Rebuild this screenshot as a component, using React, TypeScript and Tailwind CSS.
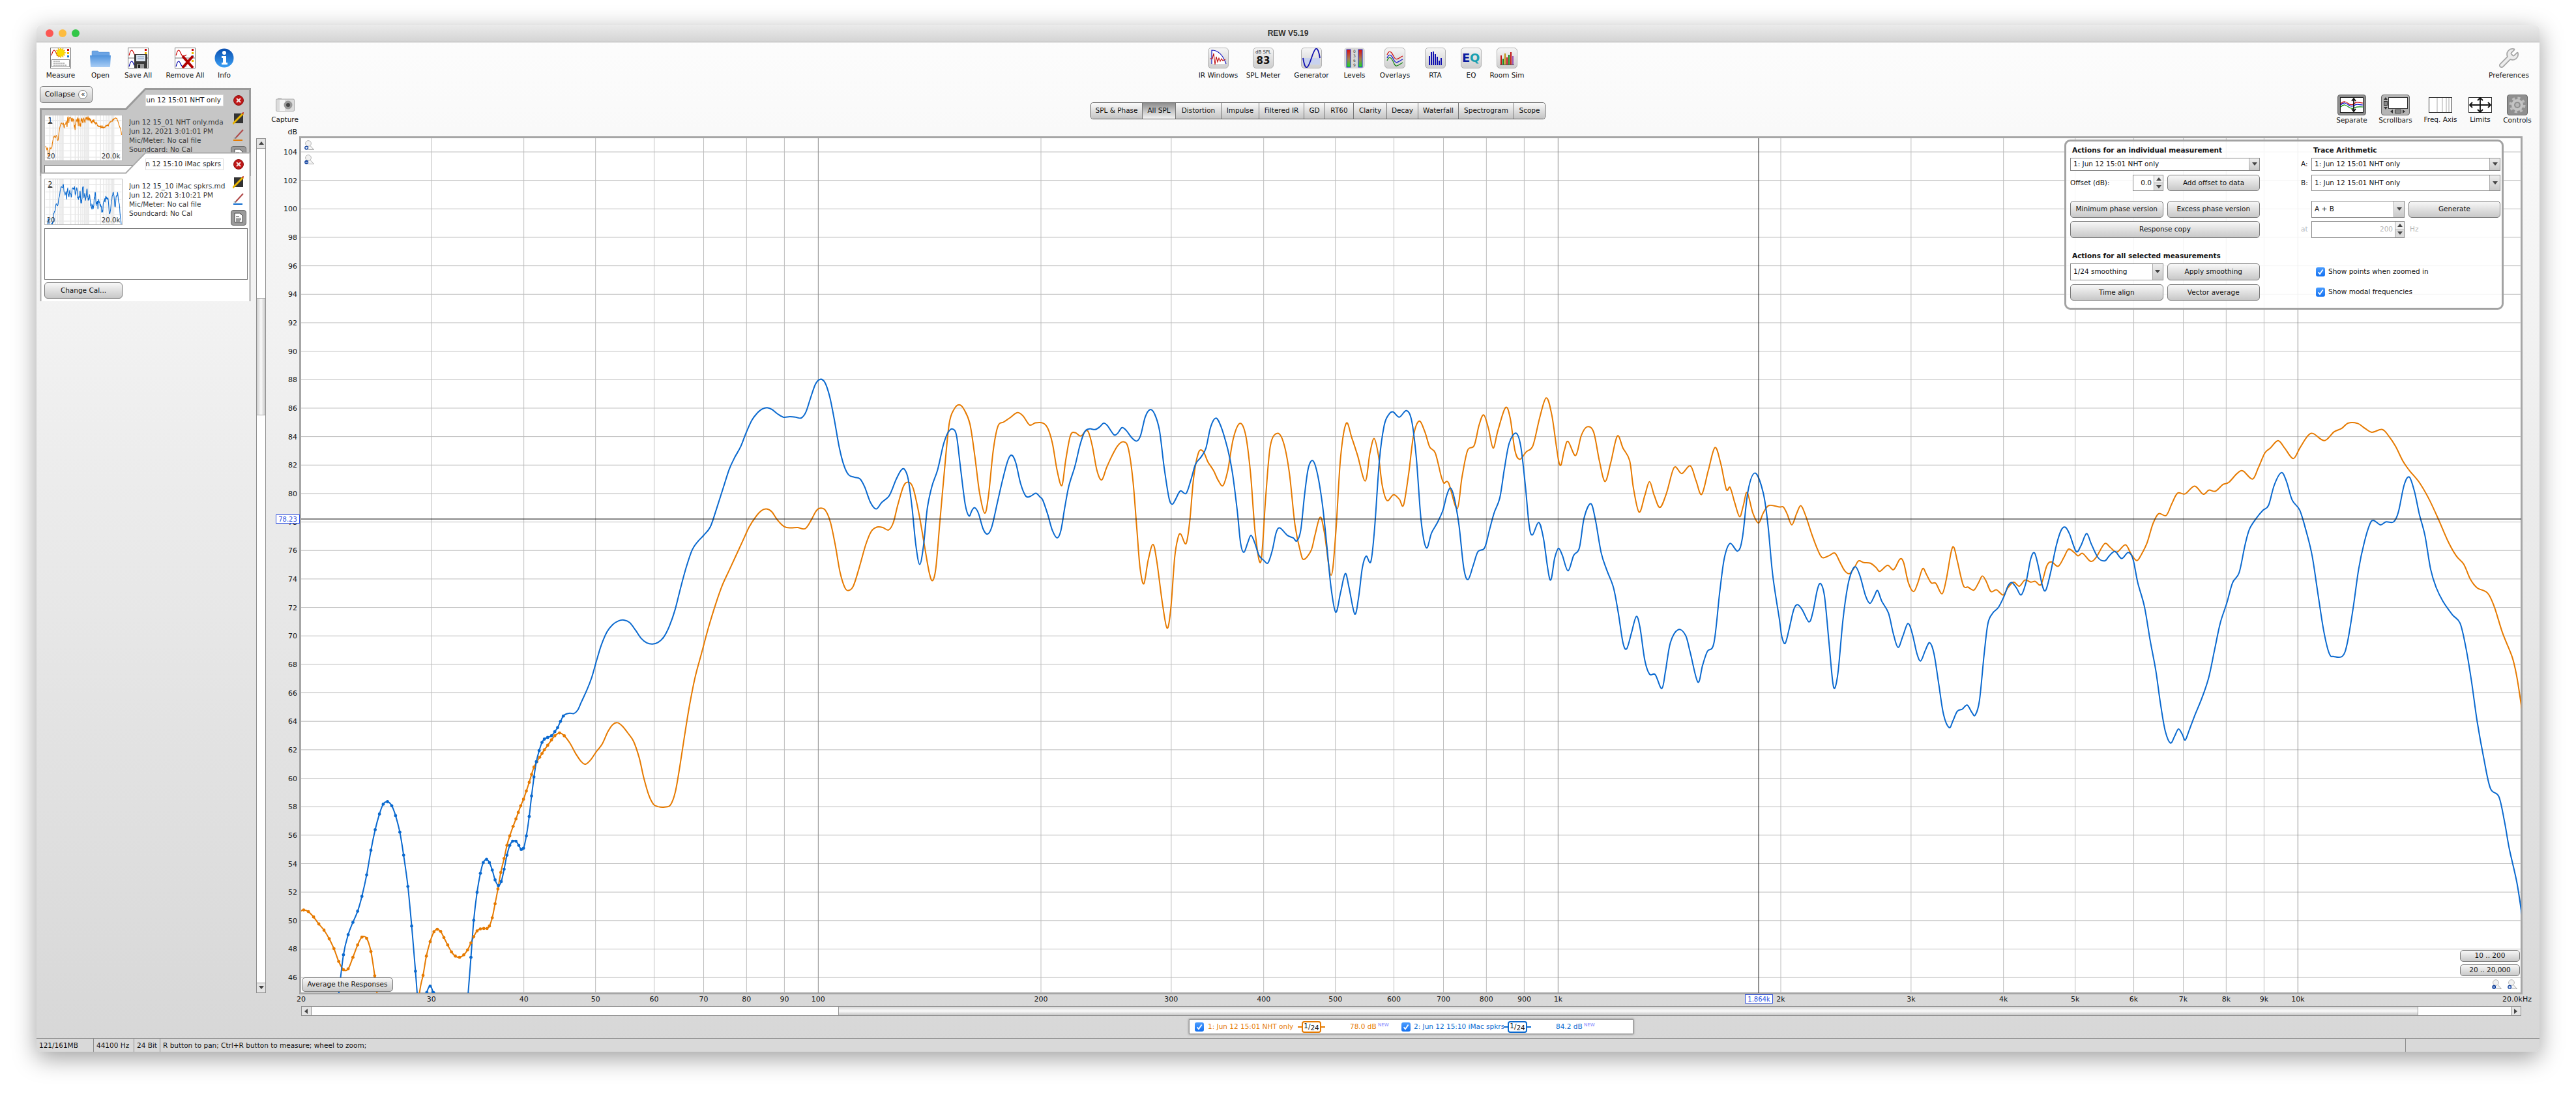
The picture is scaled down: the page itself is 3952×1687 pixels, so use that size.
import { ReactNode } from "react";
import clsx from "clsx";
import { Wrench } from "lucide-react";

// Traced curve points, one block per section of the plot: "x,y" as read off the reference
const BLUE_A =
  "82,1560 92,1464 102,1415 112,1385 122,1358 131,1322 141,1270 150,1210 159,1160 168,1122 176,1098 185,1092 194,1102 202,1126 211,1166 219,1222 228,1298 236,1394 244,1504 250,1590 256,1640 262,1590 268,1555 275,1540 281,1555 287,1590 300,1900 340,1900 351,1600 355,1560 361,1470 367,1380 374,1312 381,1266 387,1240 394,1232 400,1240 406,1258 412,1282 419,1296 425,1286 431,1256 437,1222 443,1198 449,1188 456,1188 462,1198 467,1208 472,1205 478,1175 484,1128 489,1078 494,1032 499,995 505,968 511,948 516,940 523,936 531,932 538,922 544,912 550,897 556,884 562,879 570,877 578,878 586,870 594,850 606,820 616,790 626,750 636,712 648,680 660,662 672,653 684,651 696,657 708,675 720,695 732,706 744,709 756,705 768,692 780,665 792,625 804,570 816,520 828,480 840,460 852,445 866,425 878,385 892,335 906,285 918,255 930,230 942,195 954,165 966,147 976,138 986,135 996,139 1008,150 1020,158 1034,157 1046,158 1058,160 1068,145 1078,110 1088,78 1098,66 1108,74 1118,108 1128,165 1138,230 1148,275 1158,298 1170,304 1182,308 1192,328 1204,365 1216,381 1228,365 1244,348 1258,310 1268,288 1276,285 1284,310 1292,380 1300,470 1308,516 1316,470 1324,380 1334,325 1346,285 1358,225 1368,195 1378,187 1386,205 1394,280 1404,370 1412,398 1418,385 1424,378 1432,392 1442,430 1451,442 1460,425 1472,365 1484,305 1495,260 1503,251 1511,270 1521,320 1532,350 1542,350 1553,343 1562,352";
const ORANGE_A =
  "0,1358 8,1355 18,1359 29,1372 40,1389 51,1404 62,1425 72,1449 82,1480 92,1500 102,1498 112,1470 122,1440 131,1421 141,1424 150,1456 158,1515 163,1560 175,1750 230,1750 252,1560 260,1514 267,1467 275,1432 283,1408 290,1402 297,1407 304,1422 312,1440 320,1457 328,1467 337,1470 346,1464 354,1452 361,1435 367,1420 374,1406 381,1401 388,1400 395,1400 400,1394 406,1374 412,1340 418,1304 424,1264 431,1230 437,1198 443,1175 450,1152 456,1134 461,1118 466,1102 472,1086 478,1066 484,1045 489,1026 494,1008 500,995 506,984 511,975 516,966 523,955 531,942 538,932 548,925 558,932 570,950 582,975 594,995 603,1001 614,990 626,970 638,952 650,922 660,905 670,900 680,908 692,925 704,945 716,985 726,1035 736,1075 746,1098 756,1104 770,1105 782,1100 792,1070 802,1005 812,930 822,860 834,790 848,730 862,670 878,610 892,565 906,530 920,495 934,460 948,425 962,400 974,385 985,381 996,388 1008,408 1022,424 1036,427 1050,426 1066,429 1078,410 1090,385 1100,379 1110,386 1120,415 1130,470 1140,535 1150,572 1158,579 1168,568 1180,525 1194,468 1206,435 1218,425 1230,426 1242,432 1252,415 1262,370 1274,325 1284,316 1294,330 1306,390 1318,470 1328,535 1335,555 1342,525 1350,420 1360,290 1370,175 1380,140 1391,128 1402,140 1414,175 1424,250 1434,340 1445,391 1453,350 1463,240 1473,180 1485,170 1498,160 1514,147 1526,155 1540,177 1552,172";
const BLUE_B =
  "0,490 10,545 20,610 30,640 38,610 46,520 55,430 68,350 78,270 88,215 98,203 110,206 120,195 128,180 136,190 150,227 158,220 167,198 176,210 188,240 198,252 206,230 216,155 226,126 236,145 246,210 256,360 266,480 273,505 280,485 290,452 302,462 312,410 322,345 334,315 344,280 354,195 365,160 376,195 390,285 400,380 410,530 417,660 424,698 432,660 439,630 447,660 456,710 466,730 475,740 484,690 492,620 500,600 516,630 528,640 536,652 544,610 552,470 560,360 570,331 580,390 590,510 598,650 608,840 618,938 628,860 638,783 646,840 658,945 666,880 674,760 682,713 692,735 700,600 710,330 720,190 730,145 739,135 752,156 767,130 778,170 788,320 798,570 809,680 820,620 832,580 844,530 852,470 860,440 868,480 878,590 888,760 897,807 908,750 918,695 932,680 942,610 952,540 964,480 974,360 984,260 998,220 1008,270 1018,430 1026,590 1033,628 1046,578 1056,640 1070,808 1080,720 1088,682 1096,710 1108,772 1120,710 1132,680 1142,560 1156,503 1166,570 1178,700 1190,770 1204,840 1214,940 1224,1060 1232,1084 1242,1020 1252,955 1260,1000 1270,1130 1280,1186 1292,1188 1306,1244 1314,1170 1324,1060 1340,1008 1356,1030 1366,1100 1382,1218 1392,1150 1402,1095 1416,1060 1428,860 1438,720 1450,662 1466,693 1476,640 1488,450 1503,380 1520,460 1530,590 1540,790";
const ORANGE_B =
  "0,180 10,200 20,260 30,370 40,430 48,330 58,230 68,218 80,232 94,210 104,270 114,370 124,408 134,360 146,310 158,270 170,255 180,280 190,410 198,600 205,760 213,824 222,730 232,666 240,730 252,900 262,1002 270,920 278,720 285,640 291,625 302,663 310,570 318,400 328,300 338,293 348,335 360,370 370,410 380,430 390,370 402,240 416,181 428,230 438,380 448,620 460,735 470,480 480,270 495,221 508,260 520,380 532,590 544,700 551,726 566,690 574,630 585,557 594,620 608,790 618,620 628,320 640,181 652,240 664,310 680,412 690,300 699,242 708,310 716,430 726,490 740,467 752,485 761,508 772,380 782,230 794,172 806,215 816,275 828,300 840,390 846,420 856,420 874,523 884,400 896,290 910,270 920,190 930,147 940,200 950,280 960,210 976,118 986,160 996,290 1006,325 1020,295 1034,270 1048,160 1062,79 1074,150 1090,345 1100,290 1108,253 1124,310 1136,230 1148,195 1162,215 1174,330 1186,414 1198,340 1212,232 1224,280 1238,330 1246,440 1258,537 1270,470 1280,415 1290,470 1302,518 1316,460 1332,358 1348,382 1366,351 1378,410 1390,466 1404,370 1418,278 1430,340 1442,445 1450,438 1460,500 1470,555 1478,510 1486,458 1498,540 1510,580 1520,540 1532,510";
const BLUE_C =
  "0,640 5,690 12,710 20,670 30,610 38,595 48,610 62,646 70,620 80,550 87,533 95,570 104,700 112,820 117,842 124,790 134,640 144,540 153,495 161,483 170,510 182,570 191,591 200,570 207,553 216,585 230,620 240,680 250,722 260,690 271,651 280,680 290,740 298,762 308,730 317,708 326,740 336,830 346,920 358,960 366,940 375,912 386,905 396,893 406,915 413,923 422,880 432,740 440,650 450,620 462,603 474,570 482,540 490,529 500,545 510,566 520,530 530,460 538,441 546,480 555,540 562,552 572,500 584,420 594,375 603,365 612,385 626,437 636,420 648,384 658,415 672,455 686,465 696,450 708,437 722,458 736,440 746,460 756,530 770,600 782,700 794,790 804,890 814,970 825,1006 834,985 842,964 850,980 856,997 864,970 876,925 892,870 906,810 918,730 930,650 944,590 956,530 970,500 982,420 992,370 1008,335 1020,315 1032,300 1044,240 1059,203 1070,230 1082,285 1098,315 1112,380 1124,450 1136,560 1148,670 1160,740 1170,749 1188,748 1198,710 1210,610 1222,490 1234,410 1246,355 1254,345 1268,358 1280,349 1296,349 1306,320 1318,240 1329,216 1340,260 1350,325 1362,390 1374,490 1386,545 1400,585 1420,625 1436,650 1448,720 1460,820 1472,940 1486,1050 1500,1140 1518,1165 1530,1240 1540,1320 1556,1420 1568,1530";
const ORANGE_C =
  "0,305 8,305 16,325 26,358 36,325 45,301 55,330 68,385 80,430 90,455 104,450 117,442 128,470 138,495 148,503 158,485 167,465 178,470 192,472 204,485 212,496 228,478 241,491 254,460 262,470 272,530 283,556 292,530 302,488 310,505 320,530 330,532 343,563 352,520 362,440 368,425 376,470 388,538 398,543 410,552 420,530 428,510 436,525 446,556 458,551 472,566 482,545 494,528 506,540 518,522 530,528 540,526 552,535 564,480 574,468 588,481 600,455 610,430 622,440 630,450 640,443 656,466 668,455 686,414 698,425 712,439 730,417 742,445 754,464 764,445 776,410 788,355 800,325 816,330 828,295 840,264 856,266 876,243 894,267 906,255 920,258 936,238 948,232 966,205 978,198 998,222 1010,190 1024,145 1036,130 1052,108 1066,130 1084,161 1098,130 1114,95 1126,87 1150,108 1170,82 1186,72 1200,56 1220,57 1236,72 1250,83 1272,75 1286,95 1300,125 1316,170 1330,198 1350,232 1370,280 1390,340 1410,405 1428,450 1444,475 1458,520 1472,545 1494,560 1508,600 1526,680 1546,750 1556,810 1568,920";

type Point = [number, number];

const ORIGIN_X = 408;
const ORIGIN_Y = 190;
const PLOT_BOTTOM = 1523;

const parse = (raw: string, ox: number, oy: number, sy: number): Point[] =>
  raw.split(" ").map((pair) => {
    const [ix, iy] = pair.split(",").map(Number);
    return [ox + ix / 1.3754, oy + iy / sy];
  });

const sectionA = (raw: string) => parse(raw, 460, 540, 1.5838);

const bluePoints = [...sectionA(BLUE_A), ...parse(BLUE_B, 1600, 580, 2.613), ...parse(BLUE_C, 2730, 620, 1.936)];
const orangePoints = [...sectionA(ORANGE_A), ...parse(ORANGE_B, 1600, 580, 2.613), ...parse(ORANGE_C, 2730, 620, 1.936)];

// dots only show where the points are far apart, below about 50 Hz
const dotsOf = (raw: string) => sectionA(raw).filter(([x, y]) => x <= 868 && y < PLOT_BOTTOM);

const smoothPath = (points: Point[]) => {
  let d = `M${points[0][0].toFixed(1)} ${points[0][1].toFixed(1)}`;
  for (let i = 0; i < points.length - 1; i++) {
    const p0 = points[Math.max(i - 1, 0)];
    const p1 = points[i];
    const p2 = points[i + 1];
    const p3 = points[Math.min(i + 2, points.length - 1)];
    const c1x = p1[0] + (p2[0] - p0[0]) / 6;
    const c1y = p1[1] + (p2[1] - p0[1]) / 6;
    const c2x = p2[0] - (p3[0] - p1[0]) / 6;
    const c2y = p2[1] - (p3[1] - p1[1]) / 6;
    d += `C${c1x.toFixed(1)} ${c1y.toFixed(1)} ${c2x.toFixed(1)} ${c2y.toFixed(1)} ${p2[0].toFixed(1)} ${p2[1].toFixed(1)}`;
  }
  return d;
};

const xOf = (freq: number) => 462 + 1135 * Math.log10(freq / 20);
const yOf = (db: number) => 233 + (104 - db) * 21.83;

const FREQ_LINES = [
  30, 40, 50, 60, 70, 80, 90, 100, 200, 300, 400, 500, 600, 700, 800, 900, 1000, 2000, 3000, 4000, 5000, 6000, 7000,
  8000, 9000, 10000,
];
const freqLabel = (f: number) => (f >= 1000 ? `${f / 1000}k` : `${f}`);
const DB_LINES = Array.from({ length: 30 }, (_, i) => 104 - i * 2);

function Plot() {
  const blueDots = dotsOf(BLUE_A);
  const orangeDots = dotsOf(ORANGE_A);

  return (
    <svg width={3488} height={1350} viewBox={`${ORIGIN_X} ${ORIGIN_Y} 3488 1350`} className="block">
      <defs>
        <clipPath id="plot-clip">
          <rect x={462} y={212} width={3406} height={1311} />
        </clipPath>
      </defs>
      <rect x={460.5} y={210.5} width={3408} height={1313} fill="#fff" stroke="#a6a6a6" strokeWidth={3} />
      {DB_LINES.map((db) => (
        <line key={db} x1={462} x2={3868} y1={yOf(db)} y2={yOf(db)} stroke="#bdbdbd" />
      ))}
      {FREQ_LINES.map((f) => (
        <line
          key={f}
          x1={xOf(f)}
          x2={xOf(f)}
          y1={212}
          y2={PLOT_BOTTOM}
          stroke={f === 100 || f === 1000 || f === 10000 ? "#8c8c8c" : "#bdbdbd"}
        />
      ))}
      <g clipPath="url(#plot-clip)">
        <path d={smoothPath(orangePoints)} fill="none" stroke="#e67a00" strokeWidth={2} />
        <path d={smoothPath(bluePoints)} fill="none" stroke="#0a69cf" strokeWidth={2} />
        {orangeDots.map(([x, y], i) => (
          <circle key={i} cx={x} cy={y} r={2.4} fill="#e67a00" />
        ))}
        {blueDots.map(([x, y], i) => (
          <circle key={i} cx={x} cy={y} r={2.4} fill="#0a69cf" />
        ))}
      </g>
      <line x1={462} x2={3868} y1={796} y2={796} stroke="#111" />
      <line x1={2698} x2={2698} y1={212} y2={PLOT_BOTTOM} stroke="#222" />

      <g fontSize={11} fill="#111" textAnchor="end">
        <text x={456} y={206}>
          dB
        </text>
        {DB_LINES.map((db) => (
          <text key={db} x={456} y={yOf(db) + 4}>
            {db}
          </text>
        ))}
      </g>
      <g fontSize={11} fill="#111" textAnchor="middle">
        <text x={462} y={1536}>
          20
        </text>
        {FREQ_LINES.map((f) => (
          <text key={f} x={xOf(f)} y={1536}>
            {freqLabel(f)}
          </text>
        ))}
        <text x={3884} y={1536} textAnchor="end">
          20.0kHz
        </text>
      </g>

      <rect x={423.5} y={789.5} width={36} height={13} fill="#fff" stroke="#2d4fe0" />
      <text x={441.5} y={800} fontSize={10} fill="#2d4fe0" textAnchor="middle">
        78.23
      </text>
      <rect x={2677.5} y={1525.5} width={42} height={13} fill="#fff" stroke="#2d4fe0" />
      <text x={2698.5} y={1536} fontSize={10} fill="#2d4fe0" textAnchor="middle">
        1.864k
      </text>
    </svg>
  );
}

function Magnifier({ minus }: { minus?: boolean }) {
  return (
    <svg width={15} height={15} viewBox="0 0 15 15" className="block">
      <circle cx={6} cy={5} r={4.4} fill="#f1f1f1" stroke="#b5b5b5" />
      <path d="M9 8.5 14.5 14.5 H6" fill="#f4f4f4" stroke="#aaa" />
      <circle cx={3.2} cy={11.8} r={3} fill="#0b3d9c" />
      <rect x={1.4} y={11.2} width={3.6} height={1.2} fill="#fff" />
      {!minus && <rect x={2.6} y={10} width={1.2} height={3.6} fill="#fff" />}
    </svg>
  );
}

function Arrow({ dir }: { dir: "up" | "down" | "left" | "right" }) {
  const d = { up: "M4 1 8 6H0Z", down: "M4 6 8 1H0Z", left: "M1 4 6 0V8Z", right: "M6 4 1 0V8Z" }[dir];
  return (
    <svg width={8} height={8} viewBox="0 0 8 8" className="block">
      <path d={d} fill="#444" />
    </svg>
  );
}

function Btn({ children, className }: { children: ReactNode; className?: string }) {
  return (
    <div
      className={clsx(
        "flex items-center justify-center whitespace-nowrap rounded-[5px] border border-[#777] bg-linear-to-b from-[#f8f8f8] to-[#c8c8c8] text-[10.5px] text-[#111]",
        className,
      )}
    >
      {children}
    </div>
  );
}

function Select({ value, className }: { value: string; className?: string }) {
  return (
    <div className={clsx("flex items-stretch border border-[#888] bg-white text-[10.5px] text-[#111]", className)}>
      <div className="flex flex-1 items-center overflow-hidden whitespace-nowrap pl-[4px]">{value}</div>
      <div className="flex w-[16px] items-center justify-center border-l border-[#aaa] bg-linear-to-b from-[#eee] to-[#c9c9c9]">
        <Arrow dir="down" />
      </div>
    </div>
  );
}

function Spinner({ value, className, disabled }: { value: string; className?: string; disabled?: boolean }) {
  return (
    <div className={clsx("flex items-stretch border border-[#888] bg-white text-[10.5px]", className)}>
      <div
        className={clsx(
          "flex flex-1 items-center justify-end pr-[3px]",
          disabled ? "text-[#b5b5b5]" : "text-[#111]",
        )}
      >
        {value}
      </div>
      <div className="flex w-[14px] flex-col border-l border-[#aaa]">
        <div className="flex flex-1 items-center justify-center border-b border-[#aaa] bg-[#f0f0f0]">
          <Arrow dir="up" />
        </div>
        <div className="flex flex-1 items-center justify-center bg-[#dcdcdc]">
          <Arrow dir="down" />
        </div>
      </div>
    </div>
  );
}

function Check() {
  return (
    <div className="flex h-[14px] w-[14px] shrink-0 items-center justify-center rounded-[3px] bg-linear-to-b from-[#4a9dff] to-[#0f6ff0]">
      <svg width={10} height={10} viewBox="0 0 10 10" className="block">
        <path d="M1.6 5.4 4 8.2 8.6 1.4" fill="none" stroke="#fff" strokeWidth={1.8} />
      </svg>
    </div>
  );
}

function ControlsPanel() {
  return (
    <div className="absolute left-[2759px] top-[24px] flex h-[261px] w-[674px] rounded-[9px] border-[3px] border-[#a2a2a2] bg-white/85 pl-[6px] text-[#111]">
      <div className="flex w-[291px] flex-col">
        <div className="mt-[5px] h-[16px] pl-[3px] text-[10.5px] font-bold leading-[16px]">
          Actions for an individual measurement
        </div>
        <Select value="1: Jun 12 15:01 NHT only" className="mt-[4px] h-[20px]" />
        <div className="mt-[6px] flex h-[25px] items-center text-[10.5px]">
          <div className="w-[96px]">Offset (dB):</div>
          <Spinner value="0.0" className="h-[25px] w-[47px]" />
          <Btn className="ml-[6px] h-[25px] flex-1">Add offset to data</Btn>
        </div>
        <div className="mt-[15px] flex h-[26px] gap-[6px]">
          <Btn className="flex-1">Minimum phase version</Btn>
          <Btn className="flex-1">Excess phase version</Btn>
        </div>
        <Btn className="mt-[5px] h-[26px]">Response copy</Btn>
        <div className="mt-[19px] h-[16px] pl-[3px] text-[10.5px] font-bold leading-[16px]">
          Actions for all selected measurements
        </div>
        <div className="mt-[4px] flex h-[26px] gap-[6px]">
          <Select value="1/24 smoothing" className="flex-1" />
          <Btn className="flex-1">Apply smoothing</Btn>
        </div>
        <div className="mt-[6px] flex h-[25px] gap-[6px]">
          <Btn className="flex-1">Time align</Btn>
          <Btn className="flex-1">Vector average</Btn>
        </div>
      </div>

      <div className="ml-[63px] flex w-[306px] flex-col text-[10.5px]">
        <div className="mt-[5px] h-[16px] pl-[19px] font-bold leading-[16px]">Trace Arithmetic</div>
        <div className="mt-[4px] flex h-[20px] items-center">
          <div className="w-[16px]">A:</div>
          <Select value="1: Jun 12 15:01 NHT only" className="h-[20px] flex-1" />
        </div>
        <div className="mt-[6px] flex h-[25px] items-center">
          <div className="w-[16px]">B:</div>
          <Select value="1: Jun 12 15:01 NHT only" className="h-[25px] flex-1" />
        </div>
        <div className="mt-[15px] flex h-[26px] pl-[16px]">
          <Select value="A + B" className="w-[143px]" />
          <Btn className="ml-[6px] flex-1">Generate</Btn>
        </div>
        <div className="mt-[5px] flex h-[26px] items-center text-[#b5b5b5]">
          <div className="w-[16px]">at</div>
          <Spinner value="200" disabled className="h-[26px] w-[143px]" />
          <div className="ml-[8px]">Hz</div>
        </div>
        <div className="mt-[44px] flex h-[16px] items-center pl-[23px]">
          <Check />
          <div className="ml-[5px]">Show points when zoomed in</div>
        </div>
        <div className="mt-[15px] flex h-[16px] items-center pl-[23px]">
          <Check />
          <div className="ml-[5px]">Show modal frequencies</div>
        </div>
      </div>
    </div>
  );
}

const TABS = [
  { label: "SPL & Phase", w: "w-[79px]" },
  { label: "All SPL", w: "w-[51px]", active: true },
  { label: "Distortion", w: "w-[70px]" },
  { label: "Impulse", w: "w-[58px]" },
  { label: "Filtered IR", w: "w-[69px]" },
  { label: "GD", w: "w-[32px]" },
  { label: "RT60", w: "w-[44px]" },
  { label: "Clarity", w: "w-[51px]" },
  { label: "Decay", w: "w-[48px]" },
  { label: "Waterfall", w: "w-[62px]" },
  { label: "Spectrogram", w: "w-[85px]" },
  { label: "Scope", w: "w-[47px]" },
];

function Tabs() {
  return (
    <div className="ml-[1206px] mt-[30px] flex h-[26px] self-start overflow-hidden rounded-[4px] border border-[#555]">
      {TABS.map((tab) => (
        <div
          key={tab.label}
          className={clsx(
            "flex items-center justify-center whitespace-nowrap border-r border-[#777] text-[10.5px] text-[#111] last:border-r-0",
            tab.w,
            tab.active
              ? "bg-linear-to-b from-[#8e8e8e] via-[#c4c4c4] to-[#f4f4f4]"
              : "bg-linear-to-b from-[#fafafa] to-[#c4c4c4]",
          )}
        >
          {tab.label}
        </div>
      ))}
    </div>
  );
}

// Toolbar drawings

function Sheet({ rows }: { rows?: boolean }) {
  return (
    <>
      <rect x={0.5} y={0.5} width={31} height={31} fill="#fff" stroke="#777" />
      <path d="M2 12C5 1 7 3 9 8S13 15 18 11" fill="none" stroke="#c00" strokeWidth={1.2} />
      <rect x={26} y={2} width={3} height={3} fill="#c00" />
      <rect x={26} y={7} width={3} height={3} fill="#eb0" />
      <rect x={26} y={12} width={3} height={3} fill="#17c" />
      {rows ? (
        <>
          <path d="M2 29C5 18 7 20 9 25S13 30 18 28" fill="none" stroke="#00a" strokeWidth={1.2} />
          <line x1={0} x2={32} y1={16} y2={16} stroke="#777" />
          <rect x={26} y={19} width={3} height={3} fill="#eb0" />
        </>
      ) : (
        <>
          <rect x={2.5} y={18.5} width={27} height={11} fill="#fff" stroke="#888" />
          <path d="M5 21H15M5 24H22M5 27H26" stroke="#666" strokeDasharray="2 1" />
        </>
      )}
    </>
  );
}

const svg32 = (children: ReactNode) => (
  <svg width={32} height={32} viewBox="0 0 32 32" className="block">
    {children}
  </svg>
);

const MeasureIcon = () =>
  svg32(
    <>
      <Sheet />
      <path
        d="M16 0l1.4 3 2.6-2-.4 3.3 3.3-.4-2 2.6 3 1.4-3 1.4 2 2.6-3.3-.4.4 3.3-2.6-2-1.4 3-1.4-3-2.6 2 .4-3.3-3.3.4 2-2.6-3-1.4 3-1.4-2-2.6 3.3.4-.4-3.3 2.6 2z"
        fill="#fbdc00"
        stroke="#e3a800"
        strokeWidth={0.5}
      />
    </>,
  );

const OpenIcon = () => (
  <svg width={32} height={32} viewBox="0 0 32 32" className="block">
    <defs>
      <linearGradient id="folder" x1="0" x2="0" y1="0" y2="1">
        <stop offset="0" stopColor="#4f93dd" />
        <stop offset="1" stopColor="#a9cdf5" />
      </linearGradient>
    </defs>
    <path d="M3 6a1 1 0 0 1 1-1h8l2 2h15a1 1 0 0 1 1 1v4H3z" fill="#6ba4e4" stroke="#4a86cc" strokeWidth={0.5} />
    <path d="M0 12h32l-1 17a1 1 0 0 1-1 1H2a1 1 0 0 1-1-1z" fill="url(#folder)" />
  </svg>
);

const SaveAllIcon = () =>
  svg32(
    <>
      <Sheet rows />
      <rect x={10} y={10} width={20} height={22} rx={1} fill="#3a3a3a" />
      <rect x={13} y={11} width={14} height={10} fill="#dce6f2" />
      <path d="M15 14H25M15 17H25" stroke="#7a94b8" />
      <rect x={14} y={25} width={11} height={7} fill="#999" />
      <rect x={16} y={26} width={3} height={5} fill="#222" />
    </>,
  );

const RemoveAllIcon = () =>
  svg32(
    <>
      <Sheet rows />
      <path d="M12 13 28 31M28 13 12 31" stroke="#b00000" strokeWidth={4} />
    </>,
  );

const InfoIcon = () => (
  <svg width={32} height={32} viewBox="0 0 32 32" className="block">
    <defs>
      <linearGradient id="info" x1="0" x2="0" y1="0" y2="1">
        <stop offset="0" stopColor="#0a4fb0" />
        <stop offset="1" stopColor="#3aa0f5" />
      </linearGradient>
    </defs>
    <circle cx={16} cy={16} r={14.5} fill="url(#info)" />
    <circle cx={16} cy={8} r={3} fill="#fff" />
    <path d="M12 13H19V23H21V26H12V23H14V16H12Z" fill="#fff" />
  </svg>
);

function IconBtn({ children }: { children: ReactNode }) {
  return (
    <div className="flex h-[32px] w-[32px] items-center justify-center overflow-hidden rounded-[5px] border border-[#b2b2b2] bg-linear-to-b from-[#f5f5f5] to-[#cecece]">
      <svg width={30} height={30} viewBox="0 0 30 30" className="block">
        {children}
      </svg>
    </div>
  );
}

const IrIcon = () => (
  <IconBtn>
    <path d="M5 24V3C14 3 22 10 27 24" fill="#fff" stroke="#1a1ac0" strokeWidth={1.2} />
    <path d="M2 16H6L8 8 10 25 12 13 14 21 16 15 18 20 20 16 22 19 26 17" fill="none" stroke="#c01010" strokeWidth={1.1} />
  </IconBtn>
);

const SplIcon = () => (
  <IconBtn>
    <text x={15} y={8} fontSize={7} fill="#222" textAnchor="middle">
      dB SPL
    </text>
    <text x={15} y={24} fontSize={15} fontWeight={700} fill="#111" textAnchor="middle">
      83
    </text>
  </IconBtn>
);

const GeneratorIcon = () => (
  <IconBtn>
    <path d="M2 15H28V25H2Z" fill="#c8d2ee" />
    <path d="M2 15C6 38 10 30 15 15S24-8 28 15" fill="none" stroke="#1212b0" strokeWidth={1.8} />
  </IconBtn>
);

const LevelsIcon = () => (
  <svg width={32} height={32} viewBox="0 0 32 32" className="block rounded-[5px] bg-[#d8d8d8]">
    <defs>
      <linearGradient id="meter" x1="0" x2="0" y1="0" y2="1">
        <stop offset="0" stopColor="#e01010" />
        <stop offset="0.55" stopColor="#a08050" />
        <stop offset="1" stopColor="#10e020" />
      </linearGradient>
    </defs>
    <rect x={4} y={3} width={6} height={27} fill="url(#meter)" stroke="#2030c0" />
    <rect x={22} y={3} width={6} height={27} fill="url(#meter)" stroke="#2030c0" />
    <g fontSize={6} fill="#444" textAnchor="middle">
      <text x={16} y={8}>0</text>
      <text x={16} y={15}>3</text>
      <text x={16} y={22}>6</text>
      <text x={16} y={29}>9</text>
    </g>
  </svg>
);

const OverlaysIcon = () => (
  <IconBtn>
    <path d="M3 10C7 0 11 8 14 14S22 14 27 12" fill="none" stroke="#d01010" strokeWidth={1.2} />
    <path d="M3 15C7 5 11 13 14 19S22 19 27 17" fill="none" stroke="#1010d0" strokeWidth={1.2} />
    <path d="M3 19C7 9 11 17 14 24S22 24 27 22" fill="none" stroke="#108010" strokeWidth={1.2} />
  </IconBtn>
);

const RtaIcon = () => (
  <IconBtn>
    <path
      d="M5 26V12H7V26ZM8 26V6H10V26ZM11 26V5H13V26ZM14 26V9H16V26ZM17 26V13H19V26ZM20 26V19H22V26ZM23 26V15H25V26Z"
      fill="#1010b0"
    />
  </IconBtn>
);

const EqIcon = () => (
  <IconBtn>
    <text x={1} y={21} fontSize={18} fontWeight={700} fill="#0a1aa0">
      E
    </text>
    <text x={13} y={21} fontSize={18} fontWeight={700} fill="#1aa0b0">
      Q
    </text>
  </IconBtn>
);

const RoomSimIcon = () => (
  <IconBtn>
    <rect x={5} y={11} width={2} height={14} fill="#c01010" />
    <rect x={8} y={16} width={2} height={9} fill="#108010" />
    <rect x={11} y={8} width={2} height={17} fill="#c09010" />
    <rect x={14} y={14} width={2} height={11} fill="#c01010" />
    <rect x={17} y={10} width={2} height={15} fill="#108010" />
    <rect x={20} y={6} width={2} height={19} fill="#c01010" />
    <rect x={23} y={12} width={2} height={13} fill="#9a50b0" />
    <line x1={4} x2={26} y1={25.5} y2={25.5} stroke="#555" />
  </IconBtn>
);

const PreferencesIcon = () => <Wrench size={34} strokeWidth={1.2} color="#a4a4a4" fill="#ececec" />;

const CameraIcon = () => (
  <svg width={29} height={21} viewBox="0 0 29 21" className="block">
    <rect x={3} y={0} width={6} height={3} fill="#ccc" />
    <rect x={0.5} y={2} width={28} height={18.5} rx={1.5} fill="#dcdcdc" stroke="#aaa" />
    <rect x={6} y={3} width={8} height={17} fill="#f4f4f4" />
    <circle cx={19} cy={11} r={6.5} fill="#999" />
    <circle cx={19} cy={11} r={3} fill="#444" />
  </svg>
);

const SeparateIcon = () => (
  <div className="flex h-[32px] w-[44px] items-center justify-center rounded-[4px] border border-[#666] bg-[#8c8c8c]">
    <svg width={36} height={24} viewBox="0 0 36 24" className="block">
      <rect x={0.5} y={0.5} width={35} height={23} fill="#fff" stroke="#222" />
      <path d="M1 10C6 5 9 7 13 10S20 12 23 9 31 9 35 9" fill="none" stroke="#c00" strokeWidth={1.2} />
      <path d="M1 12C6 7 9 9 13 12S20 14 23 12 31 12 35 12" fill="none" stroke="#00c" strokeWidth={1.2} />
      <path d="M1 15C6 10 9 12 13 15S20 18 23 16 31 15 35 15" fill="none" stroke="#080" strokeWidth={1.2} />
      <path d="M21 3V21M18 6 21 2 24 6M18 18 21 22 24 18" fill="none" stroke="#111" strokeWidth={1.8} />
    </svg>
  </div>
);

const ScrollbarsIcon = () => (
  <div className="flex h-[32px] w-[44px] rounded-[4px] border border-[#666] bg-[#b4b4b4]">
    <svg width={42} height={30} viewBox="0 0 42 30" className="block">
      <rect x={10.5} y={3.5} width={29} height={17} fill="#fff" stroke="#333" />
      <path d="M6 3 9 7H3ZM6 22 9 18H3ZM13 25 17 22V28ZM36 25 32 22V28Z" fill="#333" />
      <rect x={3.5} y={9.5} width={5} height={6} fill="#888" stroke="#333" />
      <rect x={20.5} y={22.5} width={9} height={5} fill="#888" stroke="#333" />
    </svg>
  </div>
);

const FreqAxisIcon = () => (
  <svg width={36} height={24} viewBox="0 0 36 24" className="block">
    <rect x={0.5} y={0.5} width={35} height={23} fill="#fff" stroke="#333" />
    <path d="M13 1V23M21 1V23M27 1V23M31 1V23" stroke="#aaa" />
  </svg>
);

const LimitsIcon = () => (
  <svg width={36} height={24} viewBox="0 0 36 24" className="block">
    <rect x={0.5} y={0.5} width={35} height={23} fill="#fff" stroke="#333" />
    <path d="M2 12H34M18 1V23M6 8 2 12 6 16M30 8 34 12 30 16M14 5 18 1 22 5M14 19 18 23 22 19" fill="none" stroke="#111" strokeWidth={1.8} />
  </svg>
);

const ControlsIcon = () => (
  <div className="flex h-[32px] w-[32px] items-center justify-center rounded-[4px] border border-[#666] bg-[#8f8f8f]">
    <svg width={26} height={26} viewBox="0 0 26 26" className="block">
      <circle cx={13} cy={13} r={10.5} fill="none" stroke="#bdbdbd" strokeWidth={4} strokeDasharray="4 4.25" />
      <circle cx={13} cy={13} r={9} fill="#c4c4c4" />
      <circle cx={13} cy={13} r={5} fill="#8f8f8f" />
      <circle cx={13} cy={13} r={3} fill="#b8b8b8" />
    </svg>
  </div>
);

function ToolItem({ icon, label, className }: { icon: ReactNode; label: string; className: string }) {
  return (
    <div className={clsx("flex shrink-0 flex-col items-center", className)}>
      <div className="flex h-[32px] items-center justify-center">{icon}</div>
      <div className="mt-[3px] whitespace-nowrap text-[10.5px] leading-[14px] text-[#111]">{label}</div>
    </div>
  );
}

function Toolbar() {
  return (
    <div className="flex h-[62px] shrink-0 pt-[8px]">
      <ToolItem icon={<MeasureIcon />} label="Measure" className="ml-[6px] w-[62px]" />
      <ToolItem icon={<OpenIcon />} label="Open" className="w-[60px]" />
      <ToolItem icon={<SaveAllIcon />} label="Save All" className="w-[56px]" />
      <ToolItem icon={<RemoveAllIcon />} label="Remove All" className="w-[88px]" />
      <ToolItem icon={<InfoIcon />} label="Info" className="w-[32px]" />
      <ToolItem icon={<IrIcon />} label="IR Windows" className="ml-[1476px] w-[66px]" />
      <ToolItem icon={<SplIcon />} label="SPL Meter" className="w-[72px]" />
      <ToolItem icon={<GeneratorIcon />} label="Generator" className="w-[76px]" />
      <ToolItem icon={<LevelsIcon />} label="Levels" className="w-[56px]" />
      <ToolItem icon={<OverlaysIcon />} label="Overlays" className="w-[68px]" />
      <ToolItem icon={<RtaIcon />} label="RTA" className="w-[56px]" />
      <ToolItem icon={<EqIcon />} label="EQ" className="w-[54px]" />
      <ToolItem icon={<RoomSimIcon />} label="Room Sim" className="w-[56px]" />
      <ToolItem icon={<PreferencesIcon />} label="Preferences" className="ml-auto mr-[12px] w-[70px]" />
    </div>
  );
}

// Sidebar measurement cards

function Thumb({ points, color, k, y0, n }: { points: Point[]; color: string; k: number; y0: number; n: string }) {
  const line = points
    .map(([x, y]) => `${(((x - 462) * 120) / 3406).toFixed(1)},${(y0 + (y - 582) * k).toFixed(1)}`)
    .join(" ");
  return (
    <svg width={120} height={71} viewBox="0 0 120 71" className="block shrink-0 border border-[#bbb] bg-white">
      {FREQ_LINES.map((f) => {
        const x = ((xOf(f) - 462) * 120) / 3406;
        return <line key={f} x1={x} x2={x} y1={0} y2={71} stroke="#e8e8e8" strokeWidth={1.6} />;
      })}
      {[8, 20, 32, 44, 56, 66].map((y) => (
        <line key={y} x1={0} x2={120} y1={y} y2={y} stroke="#e8e8e8" strokeWidth={1.4} />
      ))}
      <polyline points={line} fill="none" stroke={color} strokeWidth={1.1} />
      <text x={4} y={11} fontSize={11} fill="#111" textDecoration="underline">
        {n}
      </text>
      <text x={2} y={68} fontSize={10.5} fill="#333">
        20
      </text>
      <text x={118} y={68} fontSize={10.5} fill="#333" textAnchor="end">
        20.0k
      </text>
    </svg>
  );
}

const DeleteIcon = () => (
  <svg width={16} height={16} viewBox="0 0 16 16" className="block">
    <circle cx={8} cy={8} r={7.5} fill="#c01818" stroke="#8a1010" />
    <path d="M5 5 11 11M11 5 5 11" stroke="#f6e6e6" strokeWidth={2} />
  </svg>
);

const WriteIcon = () => (
  <svg width={18} height={20} viewBox="0 0 18 20" className="block">
    <rect x={2} y={2} width={14} height={15} fill="#333" />
    <path d="M0 18 16 2" stroke="#e8b400" strokeWidth={3} />
    <path d="M14 1 17 0 16 4" fill="#c01818" />
  </svg>
);

const BrushIcon = ({ color }: { color: string }) => (
  <svg width={18} height={20} viewBox="0 0 18 20" className="block">
    <path d="M4 15 16 2" stroke="#b04848" strokeWidth={2} />
    <path d="M1 15 6 13 5 16Z" fill="#888" />
    <rect x={1} y={17} width={14} height={2} fill={color} />
  </svg>
);

const NotesIcon = () => (
  <div className="mt-[7px] flex h-[24px] w-[24px] items-center justify-center rounded-[4px] border border-[#666] bg-[#9a9a9a]">
    <svg width={14} height={16} viewBox="0 0 14 16" className="block">
      <path d="M1 1H9L13 5V15H1Z" fill="#fff" stroke="#444" />
      <path d="M3 6H8M3 8.5H11M3 11H11M3 13H9" stroke="#333" />
    </svg>
  </div>
);

type CardProps = {
  name: string;
  file: string;
  date: string;
  n: string;
  points: Point[];
  color: string;
  k: number;
  y0: number;
  selected?: boolean;
  className: string;
  height: number;
  children?: ReactNode;
};

function Card({ name, file, date, n, points, color, k, y0, selected, className, height, children }: CardProps) {
  return (
    <div className={clsx("relative w-[324px] overflow-hidden", selected ? "text-[#3a3a3a]" : "text-[#333]", className)}>
      <svg width={324} height={height} className="absolute inset-0 block">
        <path
          d={`M1.5 32.5H132L162 1.5H322.5V${height + 4}H1.5Z`}
          fill={selected ? "#c6c6c6" : "#fff"}
          stroke={selected ? "#9a9a9a" : "#acacac"}
          strokeWidth={selected ? 3 : 2}
        />
      </svg>
      <div className="relative flex flex-col">
        <div className="mt-[10px] flex h-[18px] pl-[162px]">
          <div className="flex w-[120px] items-center justify-end overflow-hidden whitespace-nowrap border border-[#ddd] bg-white pr-[3px] text-[10.5px] text-[#222]">
            {name}
          </div>
          <div className="ml-[15px] mt-[1px]">
            <DeleteIcon />
          </div>
        </div>
        <div className="mt-[13px] flex pl-[7px]">
          <Thumb points={points} color={color} k={k} y0={y0} n={n} />
          <div className="ml-[10px] w-[148px] overflow-hidden whitespace-nowrap pt-[4px] text-[10.5px] leading-[14px]">
            <div>{file}</div>
            <div>{date}</div>
            <div>Mic/Meter: No cal file</div>
            <div>Soundcard: No Cal</div>
          </div>
          <div className="ml-[8px] -mt-[4px] flex w-[24px] flex-col items-center">
            <WriteIcon />
            <div className="mt-[5px]">
              <BrushIcon color={color} />
            </div>
            <NotesIcon />
          </div>
        </div>
        {children}
      </div>
    </div>
  );
}

function Sidebar() {
  return (
    <div className="w-[337px] shrink-0 pl-[5px] pt-[5px]">
      <Btn className="relative z-10 h-[26px] w-[81px] gap-[5px] text-[11px]">
        Collapse
        <span className="flex h-[14px] w-[14px] items-center justify-center rounded-full border border-[#777] bg-white text-[10px] leading-none">
          «
        </span>
      </Btn>
      <Card
        name="un 12 15:01 NHT only"
        file="Jun 12 15_01 NHT only.mda"
        date="Jun 12, 2021 3:01:01 PM"
        n="1"
        points={orangePoints}
        color="#e67a00"
        k={0.06}
        y0={0}
        selected
        height={135}
        className="-mt-[23px] h-[135px]"
      >
        <div className="ml-[7px] mt-[5px] h-[30px] w-[312px] border border-[#777] bg-white" />
      </Card>
      <Card
        name="n 12 15:10 iMac spkrs"
        file="Jun 12 15_10 iMac spkrs.mdat"
        date="Jun 12, 2021 3:10:21 PM"
        n="2"
        points={bluePoints}
        color="#0a69cf"
        k={0.0834}
        y0={8}
        height={229}
        className="-mt-[37px] h-[229px]"
      >
        <div className="ml-[7px] mt-[4px] h-[79px] w-[312px] border border-[#777] bg-white" />
        <Btn className="ml-[7px] mt-[4px] h-[25px] w-[120px]">Change Cal...</Btn>
      </Card>
    </div>
  );
}

function VerticalScroll() {
  return (
    <div className="mt-[22px] flex h-[1311px] w-[15px] shrink-0 flex-col border border-[#8f8f8f] bg-white">
      <div className="flex h-[15px] items-center justify-center border-b border-[#8f8f8f] bg-[#e4e4e4]">
        <Arrow dir="up" />
      </div>
      <div className="h-[229px]" />
      <div className="h-[180px] border-y border-[#aaa] bg-linear-to-r from-[#cfcfcf] via-[#fafafa] to-[#c8c8c8]" />
      <div className="flex-1" />
      <div className="flex h-[15px] items-center justify-center border-t border-[#8f8f8f] bg-[#e4e4e4]">
        <Arrow dir="down" />
      </div>
    </div>
  );
}

function HorizontalScroll() {
  return (
    <div className="ml-[54px] mt-[3px] flex h-[15px] w-[3406px] border border-[#8f8f8f] bg-white">
      <div className="flex w-[15px] items-center justify-center border-r border-[#8f8f8f] bg-[#e4e4e4]">
        <Arrow dir="left" />
      </div>
      <div className="w-[808px]" />
      <div className="w-[2424px] border-x border-[#999] bg-linear-to-b from-[#d8d8d8] via-[#fafafa] to-[#c6c6c6]" />
      <div className="flex-1" />
      <div className="flex w-[15px] items-center justify-center border-l border-[#8f8f8f] bg-[#e4e4e4]">
        <Arrow dir="right" />
      </div>
    </div>
  );
}

function Smoothing({ border, tick }: { border: string; tick: string }) {
  return (
    <div className="flex w-[42px] shrink-0 items-center">
      <div className={clsx("h-[2px] w-[6px]", tick)} />
      <div
        className={clsx(
          "flex h-[18px] w-[30px] items-center justify-center rounded-[4px] border-2 bg-white text-[10.5px] leading-none text-[#111]",
          border,
        )}
      >
        <span className="-mt-[3px]">1</span>
        <span>/</span>
        <span className="mt-[3px]">24</span>
      </div>
      <div className={clsx("h-[2px] w-[6px]", tick)} />
    </div>
  );
}

function Legend() {
  return (
    <div className="ml-[1416px] mt-[5px] flex h-[23px] w-[682px] items-center border border-[#999] bg-white text-[10.5px] shadow-[0_0_3px_rgba(0,0,0,0.5)]">
      <div className="ml-[8px]">
        <Check />
      </div>
      <div className="ml-[6px] w-[138px] overflow-hidden whitespace-nowrap text-[#e67a00]">1: Jun 12 15:01 NHT only</div>
      <Smoothing border="border-[#e67a00]" tick="bg-[#e67a00]" />
      <div className="ml-[38px] w-[40px] whitespace-nowrap text-right text-[#e67a00]">78.0 dB</div>
      <div className="mb-[4px] ml-[3px] w-[36px] text-[7px] text-[#7a7aff]">NEW</div>
      <Check />
      <div className="ml-[5px] w-[138px] overflow-hidden whitespace-nowrap text-[#0a69cf]">2: Jun 12 15:10 iMac spkrs</div>
      <Smoothing border="border-[#0a69cf]" tick="bg-[#0a69cf]" />
      <div className="ml-[38px] w-[40px] whitespace-nowrap text-right text-[#0a69cf]">84.2 dB</div>
      <div className="mb-[4px] ml-[3px] text-[7px] text-[#7a7aff]">NEW</div>
    </div>
  );
}

function StatusBar() {
  return (
    <div className="flex h-[21px] shrink-0 rounded-b-[8px] border-t border-[#8c8c8c] bg-[#d9d9d9] text-[10.5px] leading-[20px] text-[#111]">
      <div className="w-[88px] border-r border-[#8c8c8c] pl-[4px]">121/161MB</div>
      <div className="w-[62px] border-r border-[#8c8c8c] pl-[4px]">44100 Hz</div>
      <div className="w-[40px] border-r border-[#8c8c8c] pl-[4px]">24 Bit</div>
      <div className="w-[3445px] border-r border-[#8c8c8c] pl-[4px]">R button to pan; Ctrl+R button to measure; wheel to zoom;</div>
    </div>
  );
}

export default function App() {
  return (
    <div className="h-[1687px] w-[3952px] overflow-hidden bg-white pl-[56px] pt-[38px] font-['DejaVu_Sans',sans-serif]">
      <div className="flex h-[1575px] w-[3840px] flex-col rounded-[8px] bg-linear-to-b from-[#fdfdfd] to-[#d7d7d7] shadow-[0_10px_36px_rgba(0,0,0,0.38)]">
        <div className="relative flex h-[27px] shrink-0 items-center justify-center rounded-t-[8px] border-b border-[#aaa] bg-linear-to-b from-[#ebebeb] to-[#d4d4d4]">
          <div className="absolute left-[14px] flex gap-[8px]">
            <div className="h-[12px] w-[12px] rounded-full bg-[#fc5753]" />
            <div className="h-[12px] w-[12px] rounded-full bg-[#fdbc40]" />
            <div className="h-[12px] w-[12px] rounded-full bg-[#33c748]" />
          </div>
          <div className="font-['Liberation_Sans',sans-serif] text-[12px] font-bold text-[#333]">REW V5.19</div>
        </div>

        <Toolbar />

        <div className="flex h-[1465px] shrink-0">
          <Sidebar />
          <div className="flex w-[3503px] flex-col">
            <div className="flex h-[63px] shrink-0">
              <ToolItem
                icon={<CameraIcon />}
                label="Capture"
                className="ml-[14px] mt-[21px] w-[60px]"
              />
              <Tabs />
              <div className="ml-auto flex pr-[2px] pt-[18px]">
                <ToolItem icon={<SeparateIcon />} label="Separate" className="w-[68px] [&>div:last-child]:mt-0" />
                <ToolItem icon={<ScrollbarsIcon />} label="Scrollbars" className="w-[66px] [&>div:last-child]:mt-0" />
                <ToolItem icon={<FreqAxisIcon />} label="Freq. Axis" className="w-[72px] [&>div:last-child]:mt-0" />
                <ToolItem icon={<LimitsIcon />} label="Limits" className="w-[50px] [&>div:last-child]:mt-0" />
                <ToolItem icon={<ControlsIcon />} label="Controls" className="w-[64px] [&>div:last-child]:mt-0" />
              </div>
            </div>

            <div className="flex">
              <VerticalScroll />
              <div className="flex flex-col">
                <div className="relative h-[1350px] w-[3488px]">
                  <Plot />
                  <div className="absolute left-[59px] top-[25px]">
                    <Magnifier />
                  </div>
                  <div className="absolute left-[59px] top-[47px]">
                    <Magnifier minus />
                  </div>
                  <ControlsPanel />
                  <Btn className="absolute left-[55px] top-[1309px] h-[22px] w-[140px]">Average the Responses</Btn>
                  <Btn className="absolute left-[3366px] top-[1267px] h-[18px] w-[92px]">10 .. 200</Btn>
                  <Btn className="absolute left-[3366px] top-[1289px] h-[18px] w-[92px]">20 .. 20,000</Btn>
                  <div className="absolute left-[3415px] top-[1312px]">
                    <Magnifier minus />
                  </div>
                  <div className="absolute left-[3439px] top-[1312px]">
                    <Magnifier />
                  </div>
                </div>
                <HorizontalScroll />
                <Legend />
              </div>
            </div>
          </div>
        </div>

        <StatusBar />
      </div>
    </div>
  );
}
